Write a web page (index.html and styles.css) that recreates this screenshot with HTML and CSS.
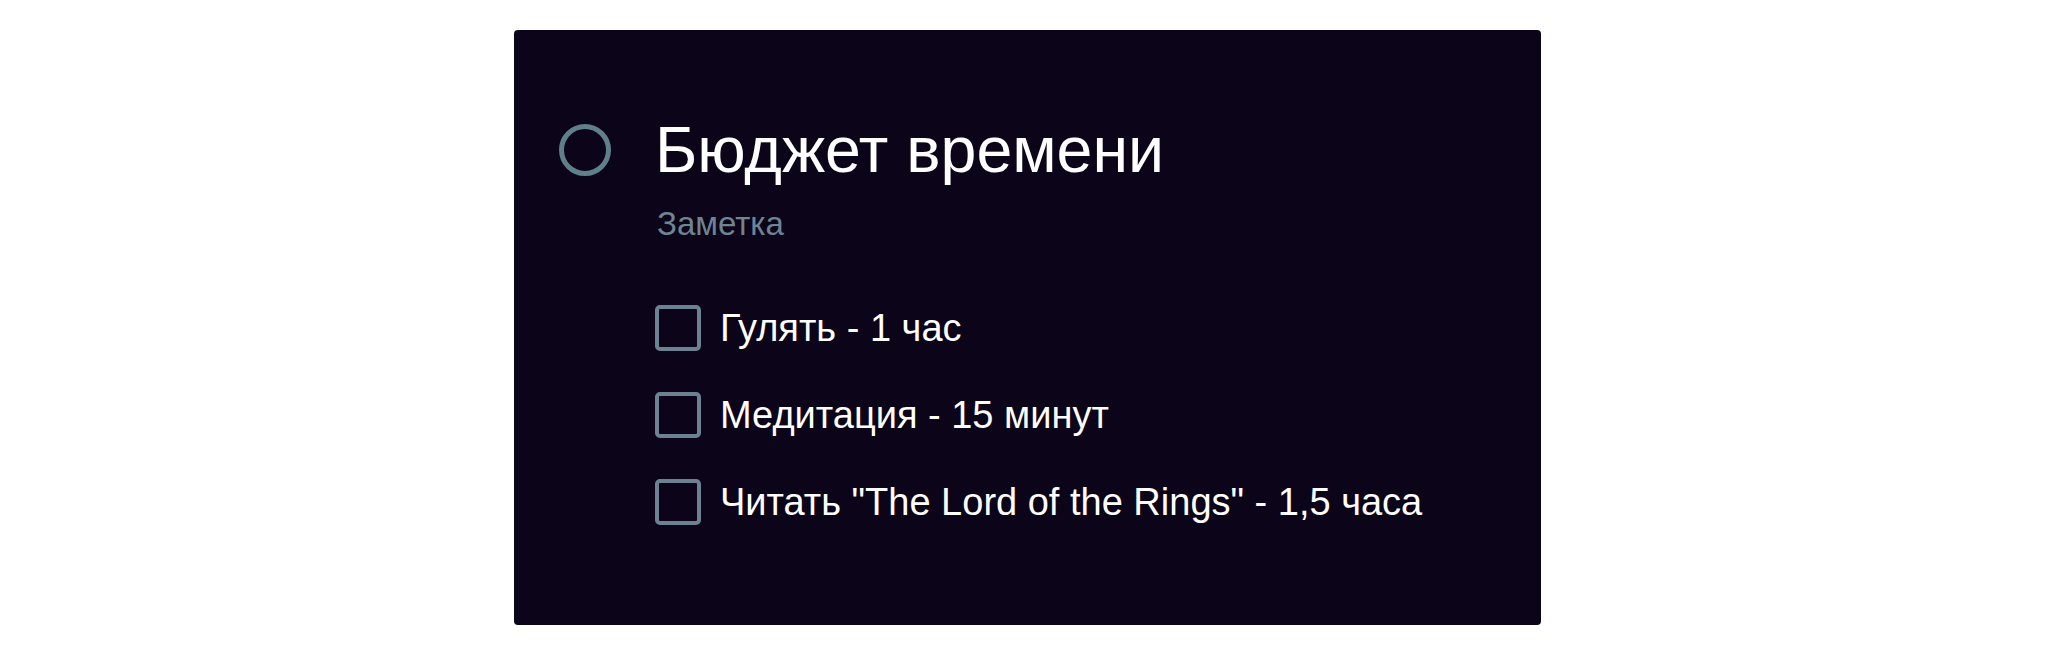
FILE: index.html
```html
<!DOCTYPE html>
<html lang="ru">
<head>
<meta charset="utf-8">
<title>Бюджет времени</title>
<link rel="stylesheet" href="styles.css">
</head>
<body>
<main class="card">
  <span class="status-circle" aria-hidden="true"></span>
  <h1 class="title">Бюджет времени</h1>
  <div class="content">
    <p class="subtitle">Заметка</p>
    <ul class="checklist">
      <li class="item"><span class="checkbox"></span><span class="label">Гулять - 1 час</span></li>
      <li class="item"><span class="checkbox"></span><span class="label">Медитация - 15 минут</span></li>
      <li class="item"><span class="checkbox"></span><span class="label">Читать "The Lord of the Rings" - 1,5 часа</span></li>
    </ul>
  </div>
</main>
</body>
</html>
```

FILE: styles.css
```css
html, body {
  margin: 0;
  padding: 0;
  background: #ffffff;
}

body {
  font-family: "Liberation Sans", Arial, Helvetica, sans-serif;
}

.card {
  box-sizing: border-box;
  width: 1027px;
  margin: 30px auto 0;
  padding: 84px 40px 100px 45px;
  background: #0c0418;
  border-radius: 4px;
  display: grid;
  grid-template-columns: 52px 1fr;
  column-gap: 44px;
  align-items: center;
}

.status-circle {
  box-sizing: border-box;
  width: 52px;
  height: 52px;
  border: 5px solid #5f7f8a;
  border-radius: 50%;
}

.title {
  margin: 0;
  font-size: 64.5px;
  line-height: 72px;
  font-weight: 400;
  color: #ffffff;
}

.content {
  grid-column: 2;
}

.subtitle {
  margin: 19px 0 0;
  padding-left: 2px;
  font-size: 33px;
  line-height: 38px;
  color: #6e8492;
}

.checklist {
  list-style: none;
  margin: 62px 0 0;
  padding: 0;
  display: flex;
  flex-direction: column;
  gap: 41px;
}

.item {
  display: flex;
  align-items: center;
  gap: 19px;
  height: 46px;
}

.checkbox {
  box-sizing: border-box;
  flex: none;
  width: 46px;
  height: 46px;
  border: 4px solid #6c8292;
  border-radius: 5px;
}

.label {
  font-size: 38px;
  line-height: 44px;
  color: #ffffff;
  white-space: nowrap;
}
```
